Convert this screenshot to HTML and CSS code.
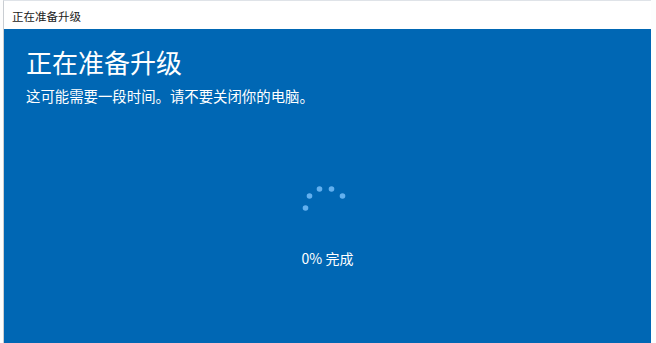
FILE: index.html
```html
<!DOCTYPE html>
<html lang="zh-CN">
<head>
  <meta charset="UTF-8">
  <meta name="viewport" content="width=device-width, initial-scale=1.0">
  <title>正在准备升级</title>
  <link rel="stylesheet" href="styles.css">
</head>
<body>
  <div class="window">
    <div class="titlebar">正在准备升级</div>
    <div class="content">
      <h1 class="heading">正在准备升级</h1>
      <p class="subtitle">这可能需要一段时间。请不要关闭你的电脑。</p>

      <div class="progress">
        <!-- Spinner dots -->
        <svg class="spinner" width="56" height="26" viewBox="0 0 56 26">
          <circle cx="6.5" cy="22" r="2.8"/>
          <circle cx="10.5" cy="10" r="2.8"/>
          <circle cx="20.5" cy="3" r="2.8"/>
          <circle cx="32.5" cy="3" r="2.8"/>
          <circle cx="43.5" cy="10" r="2.8"/>
        </svg>
        <div class="percent">0% 完成</div>
      </div>
    </div>
  </div>
</body>
</html>
```

FILE: styles.css
```css
body {
  margin: 0;
  background: #fdfdfd;
  font-family: "Noto Sans CJK SC", "Noto Sans", sans-serif;
  height: 100vh;
}

.window {
  margin-left: 3px;
  width: 648px;
  height: 100%;
  border-left: 1px solid #c9cdd2;
  border-top: 1px solid #dfe3e8;
  box-sizing: border-box;
  display: flex;
  flex-direction: column;
}

.titlebar {
  height: 28px;
  line-height: 31px;
  padding-left: 8px;
  font-size: 11.5px;
  color: #1a1a1a;
  background: #fff;
}

.content {
  flex: 1;
  background: #0067b4;
  color: #fff;
  padding: 15px 0 0 22px;
  display: flex;
  flex-direction: column;
}

.heading {
  margin: 0;
  font-size: 26px;
  font-weight: 400;
  line-height: 36px;
}

.subtitle {
  margin: 6px 0 0;
  font-size: 14.4px;
  line-height: 20px;
}

.progress {
  margin: 80px 0 0 -22px;
  display: flex;
  flex-direction: column;
  align-items: center;
}

.spinner {
  fill: #62b0ef;
  margin-left: -2px;
  margin-bottom: 2px;
}

.percent {
  margin-top: 34px;
  font-size: 14px;
  line-height: 20px;
}
```
